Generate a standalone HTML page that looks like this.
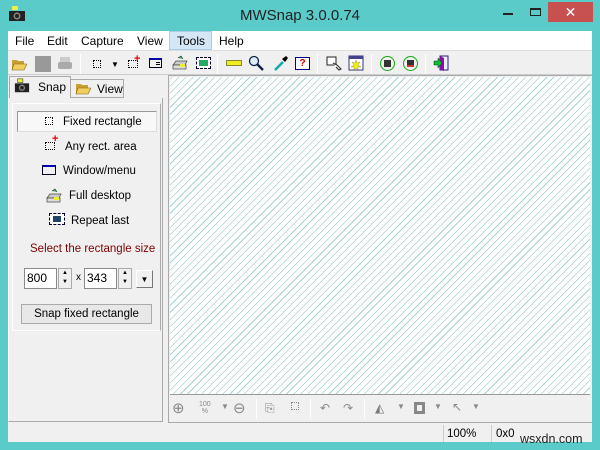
<!DOCTYPE html>
<html><head><style>
*{box-sizing:border-box;margin:0;padding:0}
body{width:600px;height:450px;background:#5bcbca;font-family:"Liberation Sans",sans-serif;font-size:12px;color:#000;position:relative;overflow:hidden}
.a{position:absolute}
.client{left:8px;top:31px;width:584px;height:411px;background:#f0f0f0}
.menu span{position:absolute;top:3px;font-size:12px}
.sep{position:absolute;width:1px;height:20px;background:#a0a0a0;border-right:1px solid #fff}
.ico{position:absolute;width:16px;height:16px}
.btn{position:absolute;left:5px;width:144px;height:21px;text-align:center;line-height:21px;font-size:11.5px}
.hatch{background:#fff repeating-linear-gradient(-45deg,#fff 0,#fff 4.2px,#a6d2d2 4.2px,#a6d2d2 5px)}
.inp{position:absolute;background:#fff;border:1px solid #8a8a8a;height:21px;font-size:12px;line-height:19px;padding-left:2px}
.spin{position:absolute;width:14px;height:21px;border:1px solid #aaa;background:#f0f0f0;font-size:6px;line-height:9px;text-align:center}
.gray{color:#888}
</style></head><body>
<svg class="a" style="left:8px;top:5px" width="18" height="18" viewBox="0 0 18 18"><rect x="4" y="1" width="6" height="4" fill="#ee4"/><rect x="1" y="6" width="16" height="10" fill="#222"/><circle cx="9" cy="11" r="3.5" fill="#888"/><circle cx="9" cy="11" r="2" fill="#222"/></svg>
<div class="a" style="left:0;width:600px;top:7px;text-align:center;font-size:15px;color:#222">MWSnap 3.0.0.74</div>
<div class="a" style="left:503px;top:13px;width:10px;height:2px;background:#222"></div>
<div class="a" style="left:530px;top:8px;width:11px;height:8px;border:1px solid #222;border-top-width:2px"></div>
<div class="a" style="left:548px;top:2px;width:45px;height:20px;background:#c75050;color:#fff;text-align:center;font-size:14px;line-height:20px">✕</div>

<div class="a client"></div>
<div class="a menu" style="left:8px;top:31px;width:584px;height:19px;background:#fff">
<span style="left:7px">File</span><span style="left:39px">Edit</span><span style="left:73px">Capture</span><span style="left:129px">View</span>
<div class="a" style="left:161px;top:0;width:43px;height:19px;background:#d5e6f6;border:1px solid #a9cde9"></div>
<span style="left:169px">Tools</span><span style="left:211px">Help</span></div>
<div class="a" style="left:8px;top:50px;width:584px;height:1px;background:#ddd"></div>
<svg class="ico" style="left:11px;top:56px" viewBox="0 0 16 16"><path d="M1 4h5l1 1h6v9H1z" fill="#c8a030"/><path d="M3 8h13l-3 6H1z" fill="#f0d060" stroke="#806010" stroke-width=".6"/></svg>
<div class="ico" style="left:35px;top:56px;background:#999"></div>
<svg class="ico" style="left:57px;top:56px" viewBox="0 0 16 16"><rect x="3" y="1" width="10" height="5" fill="#ccc"/><rect x="1" y="6" width="14" height="7" rx="2" fill="#aaa"/></svg>
<div class="sep" style="left:80px;top:54px"></div>
<div class="ico" style="left:93px;top:60px;width:8px;height:8px;border:1px dotted #000"></div>
<div class="a" style="left:111px;top:60px;font-size:8px">▼</div>
<div class="ico" style="left:128px;top:60px;width:10px;height:8px;border:1px dotted #000"></div>
<div class="a" style="left:134px;top:53px;color:#e00;font-size:11px;font-weight:bold">+</div>
<div class="ico" style="left:149px;top:58px;width:13px;height:10px;border:1px solid #002;border-top:2px solid #00a"><div style="position:absolute;right:1px;top:2px;width:4px;height:3px;border-top:1px solid #000;border-bottom:1px solid #000"></div></div>
<svg class="ico" style="left:172px;top:55px" viewBox="0 0 16 16"><path d="M1 10l3-4h11l-2 4z" fill="#ccc" stroke="#444" stroke-width=".7"/><rect x="1" y="10" width="13" height="4" fill="#ddd" stroke="#444" stroke-width=".7"/><path d="M6 3l3-2 2 3" fill="#4a6" stroke="#222" stroke-width=".6"/><rect x="8" y="9" width="5" height="3" fill="#ee3"/></svg>
<div class="ico" style="left:196px;top:57px;width:15px;height:12px;border:1px dashed #003;background:#fff"><div style="margin:2px;height:6px;background:#2a6"></div></div>
<div class="sep" style="left:217px;top:54px"></div>
<div class="ico" style="left:226px;top:60px;height:6px;background:#ee2;border:1px solid #883"></div>
<svg class="ico" style="left:248px;top:55px" viewBox="0 0 16 16"><circle cx="6" cy="6" r="4.5" fill="#def" stroke="#124" stroke-width="1.3"/><path d="M9 9l6 6" stroke="#124" stroke-width="2.4"/></svg>
<svg class="ico" style="left:273px;top:55px" viewBox="0 0 16 16"><path d="M2 15l8-8" stroke="#1aa" stroke-width="2.5"/><path d="M9 4l3 3 3-4-2-2z" fill="#000"/></svg>
<div class="ico" style="left:295px;top:57px;width:15px;height:13px;border:1px solid #008;background:#fff;color:#d00;font-weight:bold;font-size:10px;text-align:center;line-height:11px">?</div>
<div class="sep" style="left:317px;top:54px"></div>
<svg class="ico" style="left:326px;top:55px" viewBox="0 0 16 16"><rect x="1" y="2" width="9" height="8" fill="#fff" stroke="#222"/><path d="M7 8l4 2 4 4-2 1-3-3" fill="#fff" stroke="#222"/></svg>
<svg class="ico" style="left:348px;top:55px" viewBox="0 0 16 16"><rect x="1" y="1" width="14" height="14" fill="#fff" stroke="#338"/><rect x="1" y="1" width="14" height="3" fill="#448"/><path d="M8 5l1 3 3-1-2 3 3 2-3 0 0 3-2-2-2 2 0-3-3 0 3-2-2-3 3 1z" fill="#ee1" stroke="#883" stroke-width=".4"/></svg>
<div class="sep" style="left:371px;top:54px"></div>
<div class="ico" style="left:380px;top:56px;width:15px;height:15px;border:1.5px solid #1a1;border-radius:50%"><div style="margin:3px;height:7px;background:#333"></div></div>
<div class="ico" style="left:403px;top:56px;width:15px;height:15px;border:1.5px solid #1a1;border-radius:50%"><div style="margin:3px;height:7px;background:#333;border-bottom:2px solid #c33"></div></div>
<div class="sep" style="left:425px;top:54px"></div>
<svg class="ico" style="left:433px;top:55px" viewBox="0 0 16 16"><rect x="7" y="1" width="8" height="14" fill="#eef" stroke="#226"/><path d="M7 1l4 2v13l-4-1z" fill="#81a"/><path d="M1 6h4v-3l4 5-4 5v-3H1z" fill="#1b3" stroke="#031" stroke-width=".5"/></svg>
<div class="a" style="left:8px;top:74px;width:584px;height:1px;background:#ccc"></div>

<div class="a" style="left:70px;top:79px;width:54px;height:19px;border:1px solid #aaa;background:#f0f0f0"></div>
<svg class="ico" style="left:75px;top:80px" viewBox="0 0 16 16"><path d="M1 4h5l1 1h6v9H1z" fill="#c8a030"/><path d="M3 8h13l-3 6H1z" fill="#f0d060" stroke="#806010" stroke-width=".6"/></svg>
<div class="a" style="left:97px;top:82px">View</div>
<div class="a" style="left:9px;top:76px;width:62px;height:23px;border:1px solid #aaa;border-bottom:none;background:#f0f0f0"></div>
<svg class="a" style="left:14px;top:78px" width="16" height="16" viewBox="0 0 18 18"><rect x="4" y="1" width="6" height="4" fill="#ee4" stroke="#000" stroke-width=".5"/><rect x="1" y="6" width="16" height="10" fill="#222"/><circle cx="9" cy="11" r="3.5" fill="#888"/><circle cx="9" cy="11" r="2" fill="#222"/></svg>
<div class="a" style="left:38px;top:80px">Snap</div>
<div class="a" style="left:8px;top:98px;width:155px;height:324px;border:1px solid #aaa;border-top:none;border-left:1px solid #fff;background:#f0f0f0"></div>
<div class="a" style="left:12px;top:103px;width:149px;height:228px;border:1px solid #fff;border-right-color:#aaa"></div>
<div class="btn" style="left:17px;top:111px;width:140px;height:21px;border:1px solid #999;border-right-color:#ddd;border-bottom-color:#ddd;background:#f8f8f8"></div>
<div class="a" style="left:45px;top:117px;width:8px;height:8px;border:1px dotted #000"></div>
<div class="a" style="left:63px;top:116px;font-size:11.5px">Fixed rectangle</div>
<div class="a" style="left:45px;top:142px;width:10px;height:8px;border:1px dotted #000"></div>
<div class="a" style="left:52px;top:133px;color:#e00;font-weight:bold;font-size:11px">+</div>
<div class="a" style="left:65px;top:141px;font-size:11.5px">Any rect. area</div>
<div class="a" style="left:42px;top:165px;width:14px;height:10px;border:1px solid #002;border-top:2px solid #00a"></div>
<div class="a" style="left:63px;top:165px;font-size:11.5px">Window/menu</div>
<svg class="ico" style="left:46px;top:188px" viewBox="0 0 16 16"><path d="M1 10l3-4h11l-2 4z" fill="#ccc" stroke="#444" stroke-width=".7"/><rect x="1" y="10" width="13" height="4" fill="#ddd" stroke="#444" stroke-width=".7"/><path d="M6 3l3-2 2 3" fill="#4a6" stroke="#222" stroke-width=".6"/><rect x="8" y="9" width="5" height="3" fill="#ee3"/></svg>
<div class="a" style="left:69px;top:190px;font-size:11.5px">Full desktop</div>
<div class="a" style="left:49px;top:213px;width:16px;height:12px;border:1px dashed #003;background:#fff"><div style="margin:2px 3px;height:6px;background:#246"></div></div>
<div class="a" style="left:71px;top:215px;font-size:11.5px">Repeat last</div>
<div class="a" style="left:30px;top:243px;color:#800000;font-size:11.5px">Select the rectangle size</div>
<div class="inp" style="left:24px;top:268px;width:33px">800</div>
<div class="spin" style="left:58px;top:268px">▲<br>▼</div>
<div class="a" style="left:76px;top:272px;font-size:10px">x</div>
<div class="inp" style="left:84px;top:268px;width:33px">343</div>
<div class="spin" style="left:118px;top:268px">▲<br>▼</div>
<div class="a" style="left:136px;top:270px;width:17px;height:18px;border:1px solid #777;border-top-color:#fff;border-left-color:#fff;background:#f0f0f0;font-size:8px;text-align:center;line-height:17px">▼</div>
<div class="a" style="left:21px;top:304px;width:131px;height:20px;border:1px solid #aaa;background:#e8e8e8;text-align:center;line-height:18px;font-size:11.5px">Snap fixed rectangle</div>

<div class="a" style="left:168px;top:75px;width:424px;height:348px;border:1px solid #aaa;border-right:none"></div>
<div class="a hatch" style="left:170px;top:77px;width:420px;height:318px;border-bottom:1px solid #999"></div>
<div class="a gray" style="left:172px;top:399px;font-size:15px">⊕</div>
<div class="a gray" style="left:199px;top:401px;font-size:7px;line-height:7px;text-align:center">100<br>%</div>
<div class="a gray" style="left:221px;top:402px;font-size:8px">▼</div>
<div class="a gray" style="left:233px;top:399px;font-size:15px">⊖</div>
<div class="sep" style="left:256px;top:399px"></div>
<div class="a gray" style="left:265px;top:401px;font-size:12px">⎘</div>
<div class="a" style="left:291px;top:402px;width:8px;height:8px;border:1px dotted #888"></div>
<div class="sep" style="left:310px;top:399px"></div>
<div class="a gray" style="left:320px;top:401px">↶</div>
<div class="a gray" style="left:343px;top:401px">↷</div>
<div class="sep" style="left:364px;top:399px"></div>
<div class="a" style="left:375px;top:401px;color:#777">◭</div>
<div class="a gray" style="left:397px;top:402px;font-size:8px">▼</div>
<div class="a" style="left:414px;top:402px;width:11px;height:12px;border:3px solid #888"></div>
<div class="a gray" style="left:434px;top:402px;font-size:8px">▼</div>
<div class="a gray" style="left:452px;top:400px">↖</div>
<div class="a gray" style="left:472px;top:402px;font-size:8px">▼</div>
<div class="a" style="left:443px;top:425px;width:1px;height:17px;background:#ccc"></div>
<div class="a" style="left:491px;top:425px;width:1px;height:17px;background:#ccc"></div>
<div class="a" style="left:447px;top:428px;font-size:11.5px">100%</div>
<div class="a" style="left:496px;top:428px;font-size:11.5px">0x0</div>
<div class="a" style="left:520px;top:432px;font-size:12.5px;color:#222">wsxdn.com</div>
</body></html>
